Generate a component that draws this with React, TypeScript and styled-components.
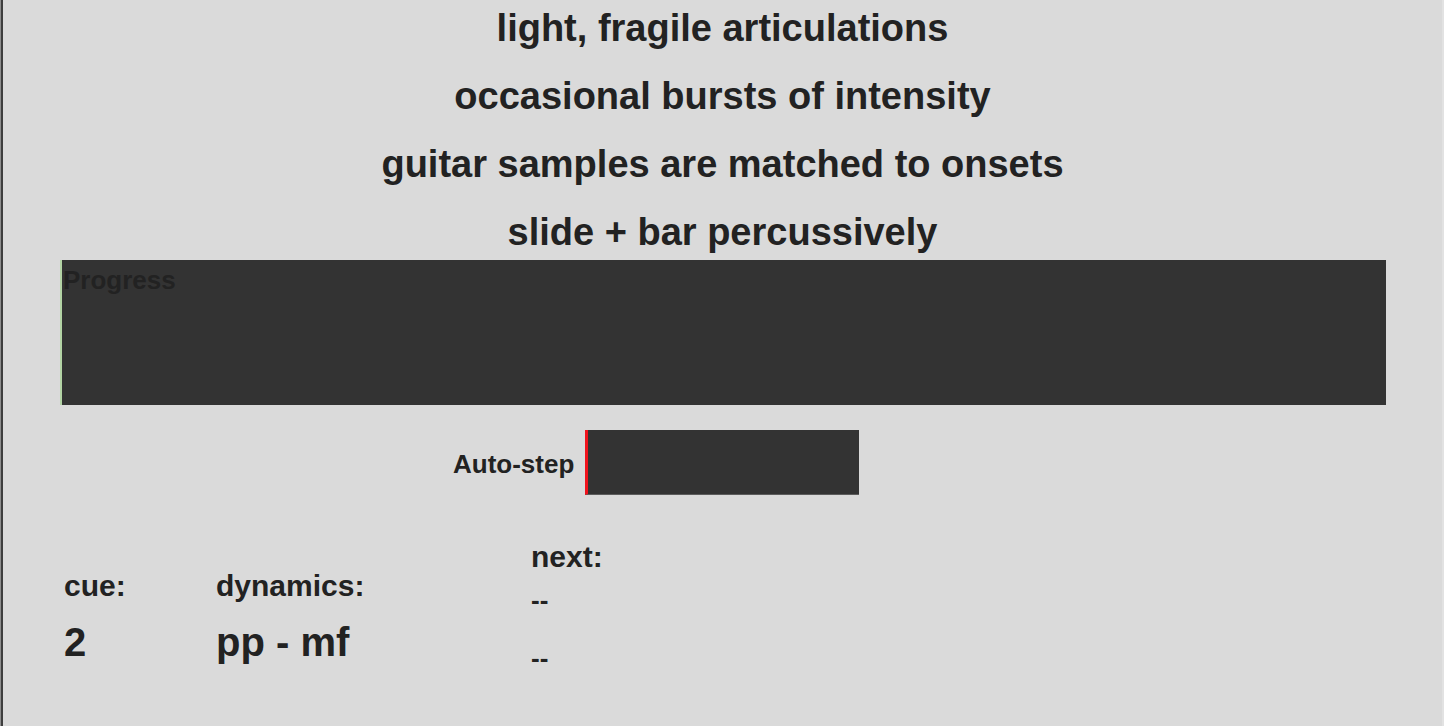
import styled, { createGlobalStyle } from 'styled-components';

const GlobalStyle = createGlobalStyle`
    html, body {
        margin: 0;
        padding: 0;
        background: #dadada;
    }
    body {
        font-family: 'Liberation Sans', Arial, Helvetica, sans-serif;
        color: #222;
    }
`;

const notes = [
    'light, fragile articulations',
    'occasional bursts of intensity',
    'guitar samples are matched to onsets',
    'slide + bar percussively',
];

const cues = [
    { label: 'cue:', value: '2', width: 152 },
    { label: 'dynamics:', value: 'pp - mf', width: 315 },
];

const nextCues = ['--', '--'];

export default function App() {
    return (
        <>
            <GlobalStyle />
            <Frame>
                <Page>
                    <Notes>
                        {notes.map((n) => (
                            <Note key={n}>{n}</Note>
                        ))}
                    </Notes>
                    <Progress>
                        <ProgressLabel>Progress</ProgressLabel>
                    </Progress>
                    <AutoRow>
                        <AutoLabel>Auto-step</AutoLabel>
                        <AutoBar />
                    </AutoRow>
                    <Info>
                        {cues.map((c) => (
                            <Column key={c.label} width={c.width} offset={29}>
                                <Label>{c.label}</Label>
                                <Value>{c.value}</Value>
                            </Column>
                        ))}
                        <Column width={300} offset={0}>
                            <Label>next:</Label>
                            <NextList>
                                {nextCues.map((n, i) => (
                                    <NextItem key={i}>{n}</NextItem>
                                ))}
                            </NextList>
                        </Column>
                    </Info>
                </Page>
            </Frame>
        </>
    );
}

const Frame = styled.div`
    border-left: 1px solid #8e8e8e;
    min-height: 100vh;
    box-sizing: border-box;
`;

const Page = styled.div`
    border-left: 2px solid #3e3e3e;
    border-right: 2px solid #e2e2e2;
    min-height: 100vh;
    box-sizing: border-box;
    display: flex;
    flex-direction: column;
`;

const Notes = styled.div`
    display: flex;
    flex-direction: column;
    align-items: center;
    gap: 24px;
    padding-top: 6px;
`;

const Note = styled.div`
    font-size: 38px;
    line-height: 44px;
    font-weight: bold;
    text-align: center;
`;

const Progress = styled.div`
    margin: 6px 56px 0 57px;
    height: 145px;
    background: #333;
    border-left: 2px solid #b3d4a5;
    box-sizing: border-box;
    padding: 5px 0 0 1px;
`;

const ProgressLabel = styled.div`
    font-size: 26px;
    line-height: 30px;
    font-weight: bold;
    color: #222;
`;

const AutoRow = styled.div`
    display: flex;
    align-items: center;
    gap: 11px;
    margin-top: 25px;
    padding-left: 450px;
`;

const AutoLabel = styled.div`
    font-size: 26px;
    font-weight: bold;
    padding-top: 3px;
`;

const AutoBar = styled.div`
    width: 274px;
    height: 65px;
    box-sizing: border-box;
    background: #333;
    border-left: 3px solid #f0121c;
    border-bottom: 1px solid #5c5c5c;
`;

const Info = styled.div`
    display: flex;
    align-items: flex-start;
    margin-top: 45px;
    padding-left: 61px;
`;

const Column = styled.div<{ width: number; offset: number }>`
    width: ${({ width }) => width}px;
    margin-top: ${({ offset }) => offset}px;
    display: flex;
    flex-direction: column;
`;

const Label = styled.div`
    font-size: 30px;
    line-height: 34px;
    font-weight: bold;
`;

const Value = styled.div`
    font-size: 40px;
    line-height: 46px;
    font-weight: bold;
    margin-top: 16px;
`;

const NextList = styled.div`
    display: flex;
    flex-direction: column;
    gap: 28px;
    margin-top: 11px;
`;

const NextItem = styled.div`
    font-size: 26px;
    line-height: 30px;
    font-weight: bold;
`;
